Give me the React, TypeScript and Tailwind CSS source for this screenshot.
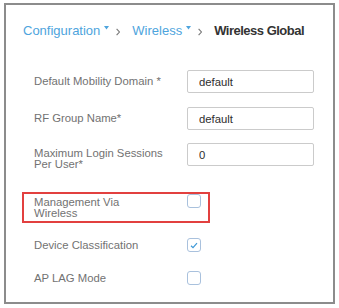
import React from 'react'

const font = { fontFamily: '"Liberation Sans", Arial, sans-serif' }

function Caret() {
  return (
    <svg width="5" height="4" viewBox="0 0 5 4" className="ml-[4px] mb-[6px]">
      <path d="M0 0 H5 L2.5 3.5 Z" fill="#4ea4dd" />
    </svg>
  )
}

function Chevron() {
  return (
    <svg width="4" height="8" viewBox="0 0 4 8" className="ml-[7px] mr-[12px] mt-[2px]">
      <path d="M0.6 0.8 L3.4 4 L0.6 7.2" fill="none" stroke="#7a7a7a" strokeWidth="1.1" />
    </svg>
  )
}

function Checkbox({ checked = false }: { checked?: boolean }) {
  return (
    <div className="flex h-[14px] w-[14px] shrink-0 items-center justify-center rounded-[3px] border-[1.5px] border-[#a9c1dd] bg-white">
      {checked && (
        <svg width="8" height="7" viewBox="0 0 8 7">
          <path d="M1 3.8 L3 5.6 L7 1.2" fill="none" stroke="#3d98d6" strokeWidth="1.2" />
        </svg>
      )}
    </div>
  )
}

function TextRow({ label, value, className = '' }: { label: React.ReactNode; value: string; className?: string }) {
  return (
    <div className={`flex items-center ${className}`}>
      <div className="w-[153px] text-[11.3px] leading-[11px] text-[#727272]">{label}</div>
      <input
        readOnly
        defaultValue={value}
        className="h-[23px] w-[127px] rounded-[2px] border border-[#cbcbcb] pl-[11px] text-[11.3px] text-[#2e2e2e] outline-none"
      />
    </div>
  )
}

export default function App() {
  return (
    <div className="h-[308px] w-[339px] bg-white pl-[4px] pt-[3px]" style={font}>
      <div className="h-[301px] w-[331px] border-2 border-[#8c8c8c] bg-white">
        <nav className="mt-[18px] flex h-[16px] items-center pl-[17px] text-[13px] leading-[16px]">
          <span className="text-[#4ea4dd]">Configuration</span>
          <Caret />
          <Chevron />
          <span className="text-[#4ea4dd]">Wireless</span>
          <Caret />
          <Chevron />
          <span className="font-bold tracking-[-0.5px] text-[#333333]">Wireless Global</span>
        </nav>

        <div className="flex flex-col pl-[28px]">
          <TextRow className="mt-[31px]" label="Default Mobility Domain *" value="default" />
          <TextRow className="mt-[14px]" label="RF Group Name*" value="default" />
          <div className="mt-[13px] flex items-start">
            <div className="w-[153px] pt-[5px] text-[11.3px] leading-[11px] text-[#727272]">
              Maximum Login Sessions
              <br />
              Per User*
            </div>
            <input
              readOnly
              defaultValue="0"
              className="h-[23px] w-[127px] rounded-[2px] border border-[#cbcbcb] pl-[11px] text-[11.3px] text-[#2e2e2e] outline-none"
            />
          </div>

          <div className="-ml-[12px] mt-[22px] flex h-[31px] w-[188px] items-start border-2 border-[#e2403f] pl-[10px]">
            <div className="w-[153px] pt-[3px] text-[11.3px] leading-[11px] text-[#727272]">
              Management Via
              <br />
              Wireless
            </div>
            <Checkbox />
          </div>

          <div className="mt-[15px] flex h-[14px] items-center">
            <div className="w-[153px] pt-[1px] text-[11.3px] leading-[11px] text-[#727272]">Device Classification</div>
            <Checkbox checked />
          </div>

          <div className="mt-[19px] flex h-[14px] items-center">
            <div className="w-[153px] pt-[1px] text-[11.3px] leading-[11px] text-[#727272]">AP LAG Mode</div>
            <Checkbox />
          </div>
        </div>
      </div>
    </div>
  )
}
